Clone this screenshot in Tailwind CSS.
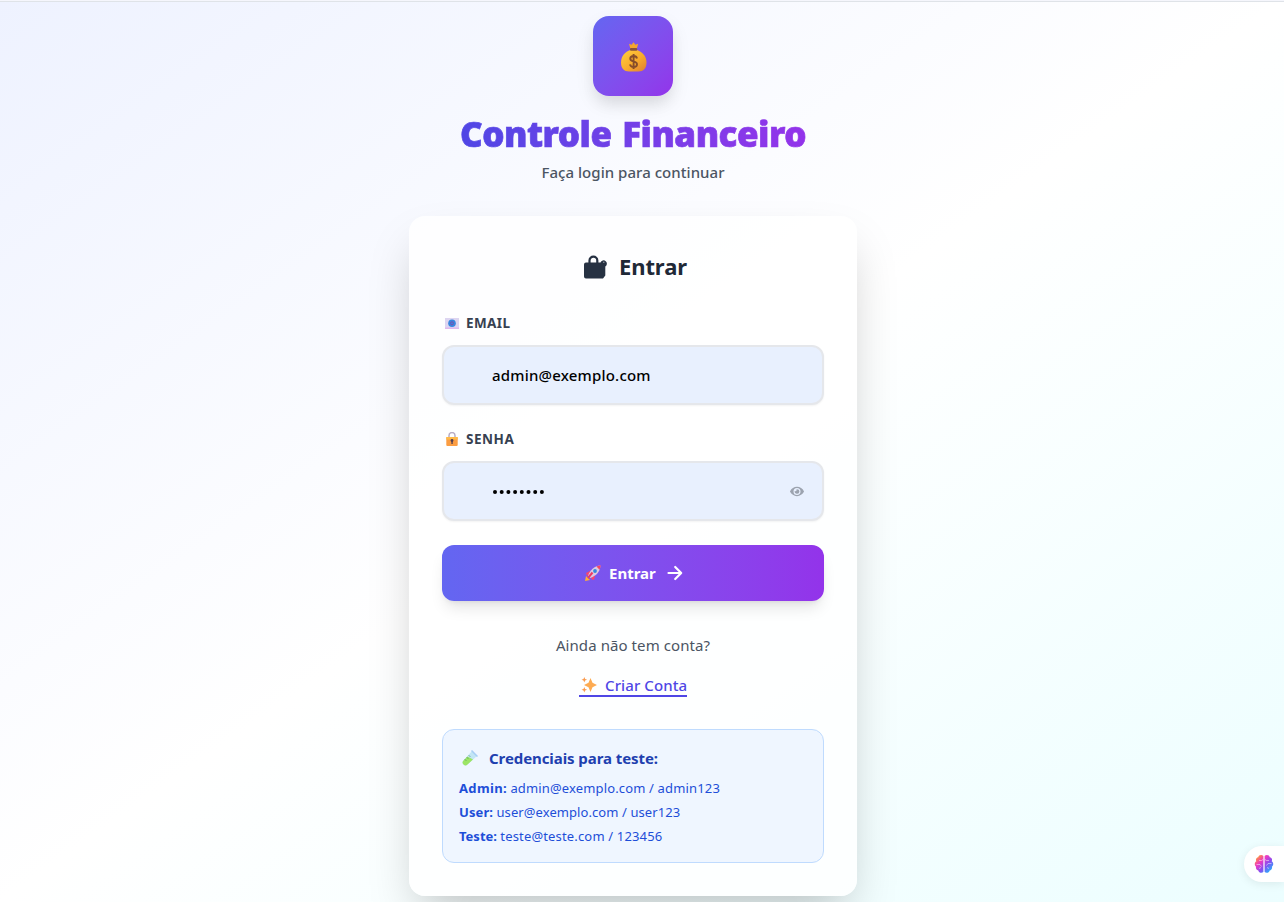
<!DOCTYPE html>
<html lang="pt-BR">
<head>
<meta charset="utf-8">
<title>Controle Financeiro</title>
<script src="https://cdn.jsdelivr.net/npm/@tailwindcss/browser@4"></script>
</head>
<body class="h-[902px] overflow-hidden font-['Noto_Sans','Open_Sans',sans-serif]">
<div class="h-[902px] overflow-hidden border-t border-[#f5f6fc] bg-[linear-gradient(to_bottom_right,#eef2ff,#ffffff_50%,#ecfeff)] pr-[18px]">
  <div class="-mr-[18px] h-px bg-[#dfe3e8]"></div>
  <main class="mx-auto mt-3.5 flex w-[448px] flex-col items-center">
    <div class="flex size-20 shrink-0 items-center justify-center rounded-2xl bg-linear-to-br from-[#6366f1] to-[#9333ea] shadow-[0_10px_15px_-3px_rgba(0,0,0,.08),0_8px_20px_0_rgba(0,0,0,.07)]">
      <svg class="mt-0.5 h-[30px] w-[27px]" viewBox="0 0 27 30">
        <defs><linearGradient id="bag" x1="0" y1="0" x2="1" y2="1"><stop offset="0" stop-color="#ffcf3e"/><stop offset=".55" stop-color="#f9ab2c"/><stop offset="1" stop-color="#dc7d36"/></linearGradient></defs>
        <path d="M9 1.800l2.600 1L13.500.2l1.900 2.600 2.800-1-1.400 4.900h-6.400z" fill="#f5a52f"/>
        <path d="M10.300 8h6.600C22 9.500 26.500 14 26.500 20.500c0 6-3.200 9-8 9H9c-4.800 0-8-3-8-9C1 14 5.200 9.500 10.300 8z" fill="url(#bag)"/>
        <rect x="10" y="6" width="7.200" height="2.800" rx="1" fill="#87523f"/>
        <path d="M17 16.500c-.4-1.700-1.600-2.500-3.300-2.500-2 0-3.400 1-3.400 2.700 0 3.700 6.700 1.800 6.700 5.500 0 1.800-1.400 2.800-3.400 2.800-1.900 0-3.200-.9-3.500-2.700M13.600 12v15" fill="none" stroke="#874d2a" stroke-width="1.900"/>
      </svg>
    </div>
    <h1 class="mt-[15px] h-12 whitespace-nowrap bg-linear-to-r from-[#4f46e5] to-[#9333ea] bg-clip-text text-[35px] font-black leading-[46px] tracking-[-0.5px] text-transparent [word-spacing:2px] [-webkit-text-stroke:0.7px_transparent]">Controle Financeiro</h1>
    <p class="mt-px h-6 whitespace-nowrap text-[15px] font-medium leading-6 tracking-[0.04px] text-[#4b5563]">Faça login para continuar</p>
    <section class="mt-8 flex h-[680px] w-[448px] shrink-0 flex-col rounded-2xl bg-white/80 px-[33px] pt-8 shadow-[0_25px_50px_-12px_rgba(0,0,0,.25)]">
      <h2 class="flex h-9 items-center pl-[141px] text-[22px] font-bold leading-9 text-[#1f2937]">
        <svg class="mr-3 mt-px h-6 w-6 shrink-0" viewBox="0 0 24 24" fill="#263142"><path d="M3 7.500h14.500a3.300 3.300 0 1 1 4.800 4v9L20 23.500H3q-2 0-2-2V9.500q0-2 2-2z"/><path d="M6.500 8.500V5.500a3.900 3.900 0 0 1 7.800 0v3" fill="none" stroke="#263142" stroke-width="2.200"/><circle cx="20.800" cy="7.300" r=".7" fill="#9ca3af"/></svg>
        <span class="tracking-[-0.1px]">Entrar</span>
      </h2>
      <div class="mt-[29px] flex h-5 items-center pl-[3px] text-[13.5px] font-bold leading-5 text-[#374151]">
        <svg class="mr-[7px] h-[11px] w-[14px] shrink-0" viewBox="0 0 14 11"><path d="M0 0h14v11H0z" fill="#ddd5f1"/><path d="M0 9.500h14V11H0z" fill="#dfb9ed"/><circle cx="7" cy="5.300" r="3.800" fill="#3987df"/><circle cx="7" cy="5.300" r="1.500" fill="none" stroke="#794fb1" stroke-width="1"/></svg>
        <span class="tracking-[0.4px]">EMAIL</span>
      </div>
      <div class="mt-3 flex h-[60px] shrink-0 items-center rounded-xl border-2 border-[#e5e7eb] bg-[#e8f0fe] pl-12 text-[15px] font-medium text-black shadow-xs"><span class="tracking-[0.2px]">admin@exemplo.com</span></div>
      <div class="mt-6 flex h-5 items-center pl-[3px] text-[13.5px] font-bold leading-5 text-[#374151]">
        <svg class="mr-[7px] h-[14px] w-[14px] shrink-0" viewBox="0 0 14 14"><path d="M4 6V3.600a3 3 0 0 1 6 0V6" fill="none" stroke="#b9adc5" stroke-width="1.500"/><rect x="1.300" y="5" width="11.400" height="9" rx="1" fill="#fb9d42"/><path d="M1.300 5h11.400v2.500H1.300z" fill="#ffba48"/><circle cx="7" cy="8.500" r="1.400" fill="#513e51"/><path d="M6.400 9h1.300v3H6.400z" fill="#513e51"/></svg>
        <span class="tracking-[0.55px]">SENHA</span>
      </div>
      <div class="mt-3 flex h-[60px] shrink-0 items-center justify-between rounded-xl border-2 border-[#e5e7eb] bg-[#e8f0fe] pl-[49px] pr-[18px] shadow-xs">
        <svg class="mt-px h-1 w-[51px]" viewBox="0 0 51 4"><g fill="#000"><circle cx="2" cy="2" r="2"/><circle cx="8.700" cy="2" r="2"/><circle cx="15.400" cy="2" r="2"/><circle cx="22.100" cy="2" r="2"/><circle cx="28.800" cy="2" r="2"/><circle cx="35.500" cy="2" r="2"/><circle cx="42.200" cy="2" r="2"/><circle cx="48.900" cy="2" r="2"/></g></svg>
        <svg class="h-[13px] w-3.5" viewBox="0 0 576 512" fill="#9ca3af"><path d="M572.500 241.400C518.300 135.600 410.900 64 288 64S57.700 135.600 3.500 241.400a32.400 32.400 0 0 0 0 29.200C57.700 376.400 165.100 448 288 448s230.300-71.600 284.500-177.400a32.400 32.400 0 0 0 0-29.200zM288 400a144 144 0 1 1 144-144 143.900 143.900 0 0 1-144 144zm0-240a95.300 95.300 0 0 0-25.300 3.800 47.900 47.900 0 0 1-66.900 66.900A95.800 95.800 0 1 0 288 160z"/></svg>
      </div>
      <div class="mt-6 flex h-14 shrink-0 items-center rounded-xl bg-linear-to-r from-[#6366f1] to-[#9333ea] pl-[143px] text-[15px] font-bold text-white shadow-lg">
        <svg class="mr-2 h-4 w-4 shrink-0" viewBox="0 0 16 16"><path d="M1 11l4 4-5 1z" fill="#ffae35"/><path d="M5 6L1 8l1 3 3-2zM10 11l-1 4-3-1 1-3z" fill="#f34472"/><path d="M3 11C5 5 9 1 15.500.500 15 7 11 11 5 13z" fill="#dcc9e2"/><path d="M11.500 1.500Q13.500.5 15.700.3q-.2 2.500-1.200 4.500z" fill="#f14669"/><circle cx="10" cy="6" r="1.900" fill="#3289df"/><path d="M7.500 7.500L3 13" stroke="#ed3863" stroke-width="2"/></svg>
        <span>Entrar</span>
        <svg class="ml-[11px] h-4 w-4 shrink-0" viewBox="0 0 16 16" fill="none" stroke="#fff" stroke-width="2.200" stroke-linecap="round" stroke-linejoin="round"><path d="M1.500 8h12.500M8.200 2L14.200 8l-6 6"/></svg>
      </div>
      <p class="mt-8 h-6 whitespace-nowrap text-center text-[15px] leading-6 tracking-[0.08px] text-[#4b5563]"><span>Ainda não tem conta?</span></p>
      <div class="mx-auto mt-4 flex h-6 w-[108px] shrink-0 items-center whitespace-nowrap border-b-2 border-[#4f46e5] pt-0.5 text-[15px] font-medium leading-[22px] text-[#4f46e5]">
        <svg class="ml-0.5 mr-2 h-4 w-4 shrink-0" viewBox="0 0 16 16"><path d="M9.500 1l2 4.700L16 8l-4.500 2.300-2 4.700-2-4.700L3 8l4.500-2.300z" fill="#fdab52"/><path d="M3.300 0l.8 2 2 .8-2 .8-.8 2-.8-2-2-.8 2-.8zM3.300 10l.8 2 2 .8-2 .8-.8 2-.8-2-2-.8 2-.8z" fill="#fa9a4c"/></svg>
        <span class="tracking-[0.1px]">Criar Conta</span>
      </div>
      <div class="mt-8 h-[134px] shrink-0 rounded-xl border border-[#bfdbfe] bg-[#eff6ff] px-4 pt-4 text-[13px] leading-6 text-[#1d4ed8]">
        <h3 class="mb-1.5 flex h-6 items-center text-[15px] font-bold text-[#1e40af]">
          <svg class="ml-[3px] mr-[11px] h-4 w-4 shrink-0" viewBox="0 0 16 16"><path d="M10 1l5 5-9.500 8.500a2.600 2.600 0 0 1-4-4z" fill="#c2e6f5"/><path d="M5.500 6.500l5.500 3-5.500 5a2.600 2.600 0 0 1-4-4z" fill="#9ce565"/><path d="M9.500.5l6 6" stroke="#a7cef5" stroke-width="1.500"/><path d="M7 5.500l1 1M5 7.500l1 1M3 9.500l1 1" stroke="#438455"/></svg>
          <span class="tracking-[-0.08px]">Credenciais para teste:</span>
        </h3>
        <p class="h-6 whitespace-nowrap"><b class="tracking-[0.35px]">Admin:</b> <span class="tracking-[0.15px]">admin@exemplo.com / admin123</span></p>
        <p class="h-6 whitespace-nowrap"><b class="tracking-[0.1px]">User:</b> <span class="tracking-[0.08px]">user@exemplo.com / user123</span></p>
        <p class="h-6 whitespace-nowrap"><b>Teste:</b> <span class="tracking-[0.16px]">teste@teste.com / 123456</span></p>
      </div>
    </section>
  </main>
</div>
<div class="absolute left-[1244px] top-[846px] flex h-9 w-10 items-center rounded-l-full bg-white pl-[10px] shadow-[0_2px_10px_rgba(0,0,0,.08)]">
  <svg class="h-5 w-5" viewBox="0 0 20 20"><defs><linearGradient id="brain" x1="0" y1="0" x2="1" y2="1"><stop offset="0.1" stop-color="#ff9830"/><stop offset=".35" stop-color="#ed37c5"/><stop offset=".6" stop-color="#864ef0"/><stop offset=".9" stop-color="#20b6ff"/></linearGradient></defs>
    <path d="M9.400 2C8 .2 4.500.8 4.300 3.200 2 3.600 1.500 5.800 2.300 7.200.3 8.500.3 11.500 2 12.700c-.4 2 .6 3.500 2.300 3.800.6 2.600 4 3 5.100 1.200zM10.600 2c1.400-1.800 4.900-1.200 5.100 1.200 2.300.4 2.800 2.600 2 4 2 1.300 2 4.300.3 5.500.4 2-.6 3.500-2.300 3.800-.6 2.600-4 3-5.100 1.200z" fill="url(#brain)"/>
    <path d="M5 6.500h2.500l1.500-1M2.500 10.500H6l1.500 2M5 14.500l2-1M15 6.500h-2.500l-1.500-1M17.500 9.500H14l-1.500 2M15 14.500l-2-1" fill="none" stroke="#fff" stroke-opacity=".6" stroke-width=".8"/></svg>
</div>
</body>
</html>
